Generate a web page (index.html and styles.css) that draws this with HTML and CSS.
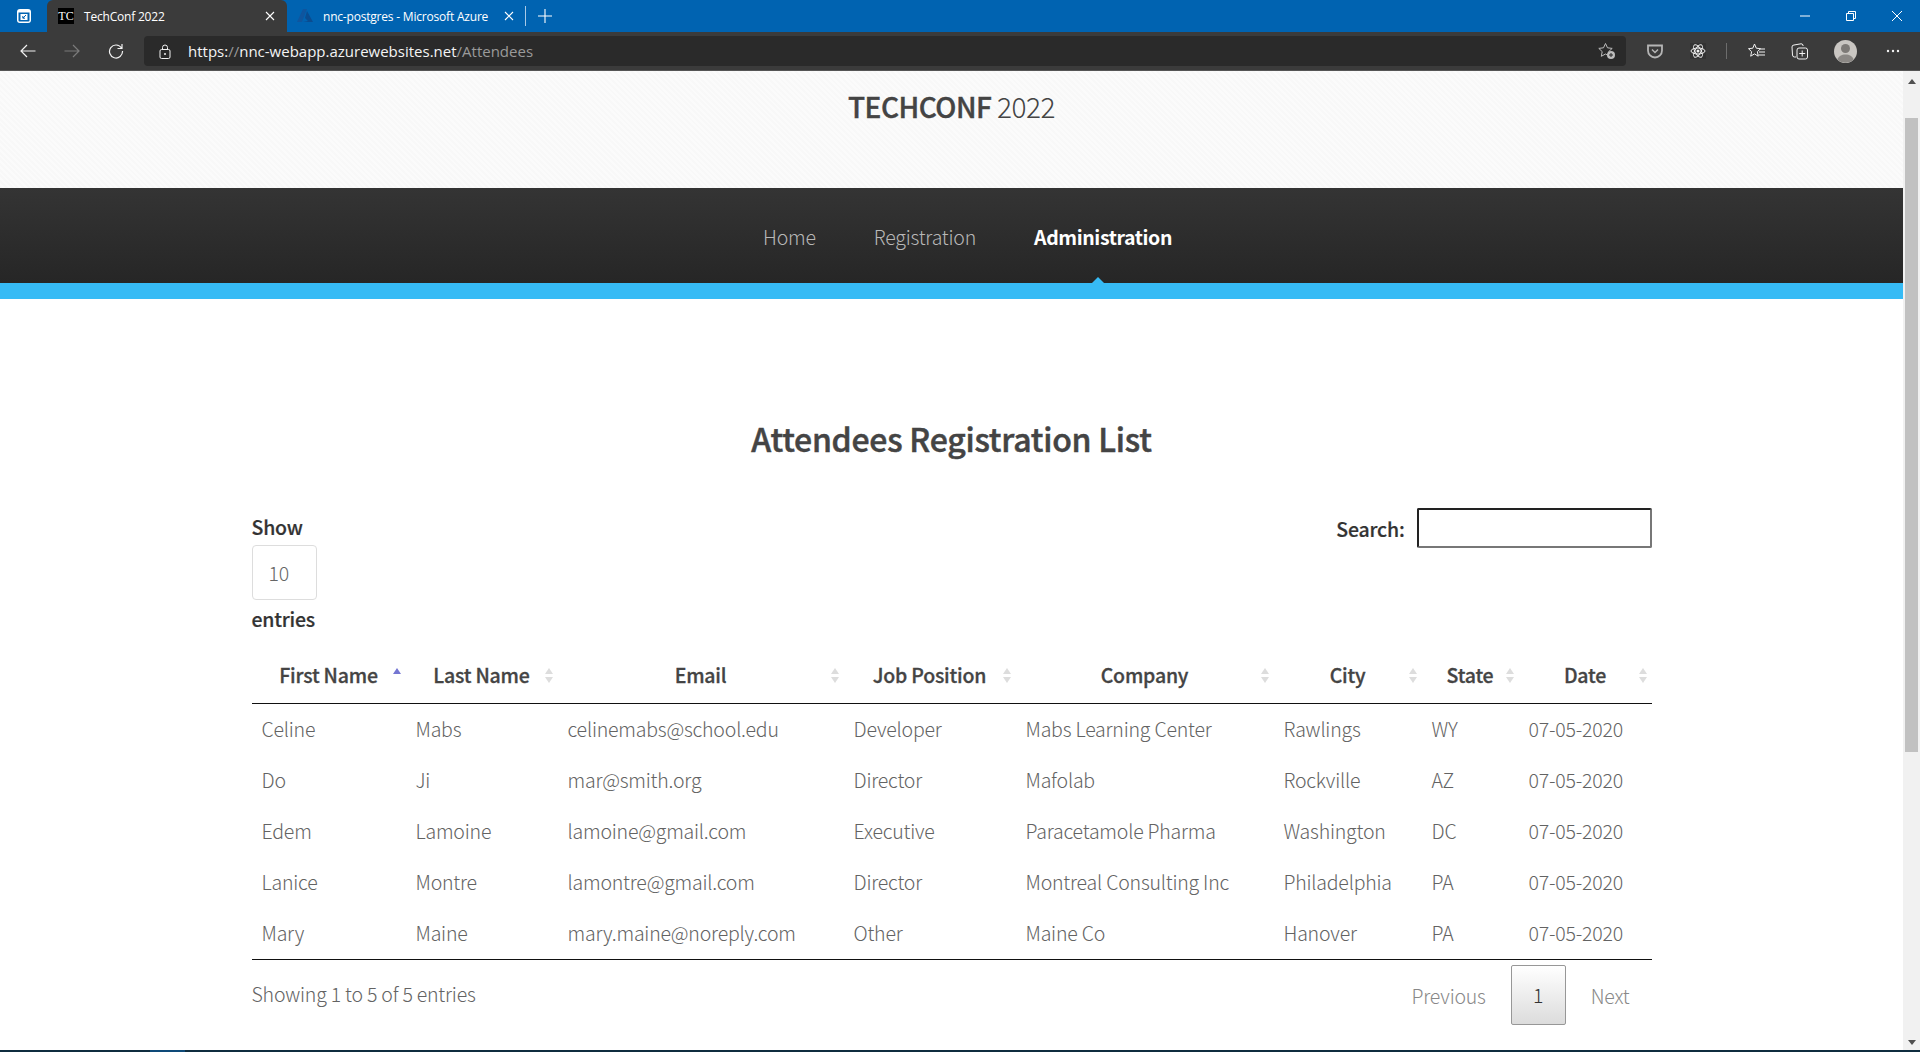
FILE: index.html
```html
<!DOCTYPE html>
<html lang="en">
<head>
  <meta charset="UTF-8" />
  <title>TechConf 2022</title>
  <link rel="stylesheet" href="styles.css">
</head>
<body>

  <div class="tabbar">
    <svg class="workspace" width="14" height="14" viewBox="0 0 14 14"><rect x="0" y="0" width="14" height="14" rx="3" fill="#fff"/><path d="M1.500 3.500h11v8a1 1 0 0 1-1 1h-9a1 1 0 0 1-1-1z" fill="#0063b1"/><rect x="3.500" y="5" width="7" height="6" fill="#fff"/><path d="M9 6 6 9M5.800 7v2.200H8" stroke="#0063b1" fill="none"/></svg>
    <div class="tab tab-active">
      <span class="favicon">TC</span>
      <span class="tab-title">TechConf 2022</span>
      <svg class="tab-close" width="10" height="10" viewBox="0 0 10 10"><path d="M1 1l8 8M9 1l-8 8" stroke="#fff" stroke-width="1.1"/></svg>
    </div>
    <div class="tab tab-other">
      <svg class="azure" width="16" height="14" viewBox="0 0 16 14"><path d="M6 0h4L5 13H0z" fill="#0f559e"/><path d="M10 2l6 11H6l5-1-3-3z" fill="#0a4c90"/></svg>
      <span class="tab-title">nnc-postgres - Microsoft Azure</span>
      <svg class="tab-close" width="10" height="10" viewBox="0 0 10 10"><path d="M1 1l8 8M9 1l-8 8" stroke="#fff" stroke-width="1.1"/></svg>
    </div>
    <span class="tab-sep"></span>
    <svg class="newtab" width="14" height="14" viewBox="0 0 14 14"><path d="M7 0v14M0 7h14" stroke="#fff" stroke-width="1.1"/></svg>
    <div class="win-btns">
      <svg width="10" height="10" viewBox="0 0 10 10"><path d="M0 5h10" stroke="#fff"/></svg>
      <svg width="10" height="10" viewBox="0 0 10 10"><path d="M.5 2.500h7v7h-7zM2.500 2.500v-2h7v7h-2" stroke="#fff" fill="none"/></svg>
      <svg width="10" height="10" viewBox="0 0 10 10"><path d="M0 0l10 10M10 0L0 10" stroke="#fff"/></svg>
    </div>
  </div>

  <div class="toolbar">
    <svg class="nav-icon back" width="16" height="16" viewBox="0 0 16 16"><path d="M15.500 8H1M7 2 1 8l6 6" stroke="#f2f2f2" fill="none" stroke-width="1.200"/></svg>
    <svg class="nav-icon forward" width="16" height="16" viewBox="0 0 16 16"><path d="M.5 8H15M9 2l6 6-6 6" stroke="#7b7b7b" fill="none" stroke-width="1.200"/></svg>
    <svg class="nav-icon reload" width="16" height="16" viewBox="0 0 16 16"><path d="M13.500 5A6.500 6.500 0 1 0 14.500 8M14 1v4.500H9.500" stroke="#f2f2f2" fill="none" stroke-width="1.200"/></svg>
    <div class="addressbar">
      <svg class="lock" width="12" height="15" viewBox="0 0 12 15"><rect x="1" y="5.500" width="10" height="9" rx="1.500" stroke="#f2f2f2" fill="none"/><path d="M3.500 5.500V3.500a2.500 2.500 0 0 1 5 0v2" stroke="#f2f2f2" fill="none"/><circle cx="6" cy="10" r="1" fill="#f2f2f2"/></svg>
      <span class="url">https:<span class="url-dim">//</span>nnc-webapp.azurewebsites.net<span class="url-dim">/Attendees</span></span>
      <svg class="addfav" width="18" height="18" viewBox="0 0 18 18"><path d="M7.500 1.500l2 4.300 4.700.6-3.500 3.200.9 4.700-4.100-2.300-4.200 2.300.9-4.700L.8 6.400l4.700-.6z" stroke="#bdbdbd" fill="none"/><circle cx="13" cy="13" r="4" fill="#bdbdbd"/><path d="M13 11v4M11 13h4" stroke="#2b2b2b"/></svg>
    </div>
    <svg class="tool pocket" width="16" height="15" viewBox="0 0 16 15"><path d="M1 1.500h14v5a7 7 0 0 1-14 0z" stroke="#b5b5b5" stroke-width="1.800" fill="none"/><path d="M5 5.500l3 3 3-3" stroke="#b5b5b5" stroke-width="1.500" fill="none"/></svg>
    <svg class="tool atom" width="16" height="16" viewBox="0 0 16 16"><rect width="16" height="16" fill="#333"/><g stroke="#f0f0f0" fill="none"><ellipse cx="8" cy="8" rx="7" ry="3"/><ellipse cx="8" cy="8" rx="7" ry="3" transform="rotate(60 8 8)"/><ellipse cx="8" cy="8" rx="7" ry="3" transform="rotate(120 8 8)"/></g><circle cx="8" cy="8" r="1.500" fill="#f0f0f0"/></svg>
    <span class="tool-sep"></span>
    <svg class="tool favs" width="18" height="17" viewBox="0 0 18 17"><path d="M6.500 1l1.800 4.200 4.200.5-3.100 3 .8 4.500-3.700-2.300-3.800 2.300.9-4.500L.5 5.700l4.300-.5z" stroke="#f2f2f2" fill="none"/><path d="M12 6h5M11 9h6M10.500 12h6.500" stroke="#f2f2f2"/></svg>
    <svg class="tool collections" width="17" height="17" viewBox="0 0 17 17"><path d="M5 14H3.500A2 2 0 0 1 1.500 12L1 4a2 2 0 0 1 2-2l7-1.200A2 2 0 0 1 12 2v1" stroke="#f2f2f2" fill="none"/><rect x="6" y="5" width="10.500" height="11" rx="2" stroke="#f2f2f2" fill="none"/><path d="M11.200 7.500v6M8.200 10.500h6" stroke="#f2f2f2"/></svg>
    <svg class="tool avatar" width="23" height="23" viewBox="0 0 23 23"><circle cx="11.500" cy="11.500" r="11.500" fill="#c9c6c2"/><circle cx="11.500" cy="8.500" r="4.500" fill="#7d7a77"/><path d="M3.500 19.500c1-3.500 4-5 8-5s7 1.500 8 5a11.500 11.500 0 0 1-16 0z" fill="#8b8885"/></svg>
    <svg class="tool dots" width="14" height="4" viewBox="0 0 14 4"><circle cx="2" cy="2" r="1.200" fill="#f2f2f2"/><circle cx="7" cy="2" r="1.200" fill="#f2f2f2"/><circle cx="12" cy="2" r="1.200" fill="#f2f2f2"/></svg>
  </div>

  <div class="viewport">
    <div class="page">
      <header class="site-head">
        <div class="brand"><b>TECHCONF</b> 2022</div>
      </header>

      <nav class="site-nav">
        <a class="nav-link">Home</a>
        <a class="nav-link">Registration</a>
        <a class="nav-link nav-current">Administration</a>
      </nav>
      <div class="nav-stripe"></div>

      <main class="content">
        <h1>Attendees Registration List</h1>

        <div class="table-top">
          <div class="length">
            <div>Show</div>
            <div class="length-select">10</div>
            <div>entries</div>
          </div>
          <div class="search">
            <span>Search:</span>
            <span class="search-box"></span>
          </div>
        </div>

        <table class="attendees">
          <colgroup>
            <col class="c-first"><col class="c-last"><col class="c-email"><col class="c-job">
            <col class="c-company"><col class="c-city"><col class="c-state"><col class="c-date">
          </colgroup>
          <thead>
            <tr>
              <th><span class="sort sort-asc"></span>First Name</th>
              <th><span class="sort"></span>Last Name</th>
              <th><span class="sort"></span>Email</th>
              <th><span class="sort"></span>Job Position</th>
              <th><span class="sort"></span>Company</th>
              <th><span class="sort"></span>City</th>
              <th><span class="sort"></span>State</th>
              <th><span class="sort"></span>Date</th>
            </tr>
          </thead>
          <tbody>
            <tr><td>Celine</td><td>Mabs</td><td>celinemabs@school.edu</td><td>Developer</td><td>Mabs Learning Center</td><td>Rawlings</td><td>WY</td><td>07-05-2020</td></tr>
            <tr><td>Do</td><td>Ji</td><td>mar@smith.org</td><td>Director</td><td>Mafolab</td><td>Rockville</td><td>AZ</td><td>07-05-2020</td></tr>
            <tr><td>Edem</td><td>Lamoine</td><td>lamoine@gmail.com</td><td>Executive</td><td>Paracetamole Pharma</td><td>Washington</td><td>DC</td><td>07-05-2020</td></tr>
            <tr><td>Lanice</td><td>Montre</td><td>lamontre@gmail.com</td><td>Director</td><td>Montreal Consulting Inc</td><td>Philadelphia</td><td>PA</td><td>07-05-2020</td></tr>
            <tr><td>Mary</td><td>Maine</td><td>mary.maine@noreply.com</td><td>Other</td><td>Maine Co</td><td>Hanover</td><td>PA</td><td>07-05-2020</td></tr>
          </tbody>
        </table>

        <div class="table-bottom">
          <div class="info">Showing 1 to 5 of 5 entries</div>
          <div class="pager">
            <span class="pager-link">Previous</span>
            <span class="pager-num">1</span>
            <span class="pager-link">Next</span>
          </div>
        </div>
      </main>
    </div>

    <div class="scrollbar">
      <span class="arrow-up"></span>
      <span class="thumb"></span>
      <span class="arrow-down"></span>
    </div>
  </div>

  <div class="taskbar"><span class="task-active"></span></div>

</body>
</html>
```

FILE: styles.css
```css
* {
  box-sizing: border-box;
}

html, body {
  margin: 0;
  height: 100%;
  overflow: hidden;
}

body {
  display: flex;
  flex-direction: column;
  height: 1052px;
  font-family: "Noto Sans CJK SC", "Noto Sans", sans-serif;
  font-weight: 300;
  font-size: 19.5px;
  letter-spacing: -0.2px;
  color: #636363;
  background: #fff;
}

/* browser chrome */
.tabbar {
  height: 32px;
  flex: none;
  display: flex;
  align-items: center;
  background: #0063b1;
  color: #fff;
  font-family: "Open Sans", sans-serif;
  font-weight: 400;
  font-size: 12px;
  letter-spacing: 0;
}

.workspace {
  margin-left: 17px;
  margin-right: 16px;
}

.tab {
  display: flex;
  align-items: center;
  height: 32px;
}

.tab-active {
  width: 240px;
  background: #3b3b3b;
  border-radius: 6px 6px 0 0;
  padding-left: 11px;
}

.tab-other {
  width: 238px;
  padding-left: 10px;
}

.favicon {
  width: 16px;
  height: 16px;
  background: #000;
  color: #fff;
  font-family: "Liberation Serif", serif;
  font-size: 12px;
  line-height: 16px;
  text-align: center;
  margin-right: 10px;
}

.azure {
  margin-right: 10px;
}

.tab-title {
  flex: 1;
  white-space: nowrap;
  letter-spacing: -0.2px;
}

.tab-close {
  margin-right: 12px;
}

.tab-other .tab-close {
  margin-right: 11px;
}

.tab-sep {
  width: 1px;
  height: 20px;
  background: #a9c9e6;
}

.newtab {
  margin-left: 12px;
}

.win-btns {
  margin-left: auto;
  display: flex;
  gap: 36px;
  padding-right: 18px;
}

.toolbar {
  height: 39px;
  flex: none;
  display: flex;
  align-items: center;
  background: #3b3b3b;
  border-bottom: 1px solid #555;
  font-family: "Open Sans", sans-serif;
  font-weight: 400;
  letter-spacing: 0;
}

.nav-icon {
  flex: none;
}

.back {
  margin-left: 20px;
}

.forward {
  margin-left: 28px;
}

.reload {
  margin-left: 28px;
}

.addressbar {
  width: 1482px;
  height: 30px;
  margin-left: 20px;
  padding: 0 10px 0 15px;
  display: flex;
  align-items: center;
  background: #2a2a2a;
  border-radius: 4px;
  flex: none;
}

.url {
  margin-left: 17px;
  font-size: 15px;
  color: #f4f4f4;
  white-space: nowrap;
}

.url-dim {
  color: #9a9a9a;
}

.addfav {
  margin-left: auto;
}

.tool {
  flex: none;
}

.pocket {
  margin-left: 21px;
}

.atom {
  margin-left: 27px;
}

.tool-sep {
  width: 1px;
  height: 16px;
  background: #6d6d6d;
  margin-left: 20px;
}

.favs {
  margin-left: 21px;
}

.collections {
  margin-left: 25px;
}

.avatar {
  margin-left: 26px;
}

.dots {
  margin-left: 29px;
}

/* page */
.viewport {
  flex: 1;
  min-height: 0;
  display: flex;
}

.page {
  flex: 1;
  min-width: 0;
  overflow: hidden;
}

.scrollbar {
  width: 17px;
  flex: none;
  display: flex;
  flex-direction: column;
  align-items: center;
  background: #f1f1f1;
  padding: 8px 0 5px;
}

.arrow-up {
  border: 4px solid transparent;
  border-top: 0;
  border-bottom: 5px solid #505050;
  margin-bottom: 34px;
}

.thumb {
  width: 13px;
  height: 634px;
  background: #c1c1c1;
}

.arrow-down {
  margin-top: auto;
  border: 4px solid transparent;
  border-bottom: 0;
  border-top: 5px solid #505050;
}

.site-head {
  height: 117px;
  padding-top: 13px;
  text-align: center;
  background-color: #fbfbfb;
  background-image: repeating-linear-gradient(45deg, rgba(0, 0, 0, 0.012) 0 2px, transparent 2px 4px);
}

.brand {
  font-size: 28px;
  line-height: 44px;
  letter-spacing: -0.5px;
  color: #444;
}

.brand b {
  font-weight: 500;
  -webkit-text-stroke: 0.4px #444;
}

.site-nav {
  height: 95px;
  display: flex;
  justify-content: center;
  gap: 58px;
  align-items: center;
  padding: 2px 0 0 32px;
  background: linear-gradient(#343434, #262626);
}

.nav-link {
  color: #b8b8b8;
  position: relative;
}

.nav-current {
  color: #fff;
  font-weight: 700;
  letter-spacing: -0.4px;
}

/* little notch pointing at the current page */
.nav-current::after {
  content: "";
  position: absolute;
  left: 50%;
  bottom: -34px;
  margin-left: -13px;
  border: 8px solid transparent;
  border-top: 0;
  border-bottom-color: #36bbf5;
}

.nav-stripe {
  height: 16px;
  background: #36bbf5;
}

.content {
  width: 1400px;
  margin: 0 auto;
}

h1 {
  margin: 0;
  padding-top: 114px;
  font-size: 32px;
  line-height: 50px;
  font-weight: 500;
  letter-spacing: -0.25px;
  -webkit-text-stroke: 0.5px #444;
  text-align: center;
  color: #444;
}

.table-top {
  display: flex;
  justify-content: space-between;
  margin-top: 38px;
  font-weight: 500;
  color: #333;
  -webkit-text-stroke: 0.2px #333;
}

.length {
  padding-top: 11px;
  line-height: 30px;
}

.length-select {
  width: 65px;
  height: 55px;
  margin: 3px 0 4px;
  border: 1px solid #ddd;
  border-radius: 4px;
  padding-left: 16px;
  line-height: 53px;
  font-weight: 300;
  color: #666;
  -webkit-text-stroke: 0;
}

.search {
  display: flex;
  align-items: center;
  gap: 12px;
  height: 40px;
  margin-top: 7px;
}

.search-box {
  width: 235px;
  height: 40px;
  border: 2px solid;
  border-color: #222 #777 #777 #222;
  border-radius: 2px;
}

.attendees {
  width: 1400px;
  table-layout: fixed;
  border-collapse: separate;
  border-spacing: 0;
  margin-top: 13px;
}

.c-first { width: 154px; }
.c-last { width: 152px; }
.c-email { width: 286px; }
.c-job { width: 172px; }
.c-company { width: 258px; }
.c-city { width: 148px; }
.c-state { width: 97px; }
.c-date { width: 133px; }

th {
  position: relative;
  height: 57px;
  padding: 0 10px 1px;
  font-weight: 500;
  color: #444;
  -webkit-text-stroke: 0.3px #444;
  text-align: center;
  border-bottom: 1px solid #111;
  white-space: nowrap;
}

td {
  height: 51px;
  padding: 0 10px 2px;
  white-space: nowrap;
}

tbody tr:last-child td {
  height: 52px;
  border-bottom: 1px solid #111;
}

/* sort arrows, two border triangles at the right of the header */
.sort {
  position: absolute;
  right: 5px;
  top: 21px;
  width: 8px;
  height: 15px;
}

.sort::before,
.sort::after {
  content: "";
  position: absolute;
  left: 0;
  border: 4px solid transparent;
}

.sort::before {
  top: 0;
  border-top: 0;
  border-bottom: 6px solid #ddd;
}

.sort::after {
  bottom: 0;
  border-bottom: 0;
  border-top: 6px solid #ddd;
}

.sort-asc::before {
  border-bottom-color: #7476d2;
}

.sort-asc::after {
  display: none;
}

.table-bottom {
  display: flex;
  justify-content: space-between;
  padding-top: 5px;
}

.info {
  line-height: 58px;
}

.pager {
  display: flex;
  align-items: center;
  height: 60px;
  color: #888;
  padding-right: 22px;
}

.pager-num {
  width: 55px;
  height: 60px;
  margin: 0 25px;
  border: 1px solid #979797;
  border-radius: 2px;
  background: linear-gradient(#fff, #dcdcdc);
  color: #333;
  text-align: center;
  line-height: 58px;
}

.taskbar {
  height: 2px;
  flex: none;
  background: #0f2d3f;
  padding-left: 150px;
}

.task-active {
  display: block;
  width: 35px;
  height: 2px;
  background: #0e4a78;
}
```
